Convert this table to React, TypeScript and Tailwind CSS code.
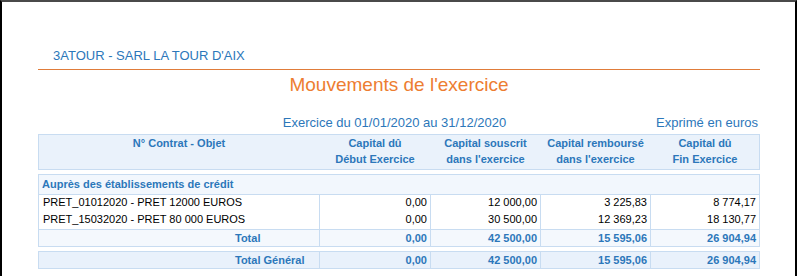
import React from "react";

const blue = "text-[#2c77ba]";
const cols = "grid grid-cols-[280px_111px_110px_110px_109px]";

const loans = [
  { label: "PRET_01012020 - PRET 12000 EUROS", values: ["0,00", "12 000,00", "3 225,83", "8 774,17"] },
  { label: "PRET_15032020 - PRET 80 000 EUROS", values: ["0,00", "30 500,00", "12 369,23", "18 130,77"] },
];

const totals = ["0,00", "42 500,00", "15 595,06", "26 904,94"];

const headers = [
  ["Capital dû", "Début Exercice"],
  ["Capital souscrit", "dans l'exercice"],
  ["Capital remboursé", "dans l'exercice"],
  ["Capital dû", "Fin Exercice"],
];

function TotalRow({ label, bg }: { label: string; bg: string }) {
  return (
    <div className={`${cols} ${bg} border border-[#c8dcf1] leading-[16px] font-bold ${blue}`}>
      <div className="pl-[196px]">{label}</div>
      {totals.map((v, i) => (
        <div key={i} className="border-l border-[#c8dcf1] text-right pr-[3px]">
          {v}
        </div>
      ))}
    </div>
  );
}

export default function App() {
  return (
    <div
      className="w-[797px] h-[276px] overflow-hidden bg-white border-t-2 border-t-[#4a4a4a] border-l-2 border-l-black border-r-2 border-r-black pt-[46px] pl-[36px]"
      style={{ fontFamily: '"Liberation Sans", Arial, sans-serif' }}
    >
      <div className="w-[722px]">
        <div className={`pl-[15px] pb-[6px] border-b border-[#e07c3a] text-[13px] leading-[15px] ${blue}`}>
          3ATOUR - SARL LA TOUR D'AIX
        </div>
        <div className="mt-[4px] text-center text-[19px] leading-[22px] text-[#ed7d31]">
          Mouvements de l'exercice
        </div>

        <div className={`mt-[19px] grid grid-cols-[1fr_auto_1fr] text-[13px] leading-[15px] ${blue}`}>
          <div />
          <div className="pr-[9px]">Exercice du 01/01/2020 au 31/12/2020</div>
          <div className="text-right pr-[2px]">Exprimé en euros</div>
        </div>

        <div className={`mt-[4px] ${cols} bg-[#eaf2fb] border border-[#c8dcf1] pb-[2px] text-[11px] leading-[16px] font-bold ${blue}`}>
          <div className="text-center">N° Contrat - Objet</div>
          {headers.map((h, i) => (
            <div key={i} className="text-center border-l border-transparent">
              <div>{h[0]}</div>
              <div>{h[1]}</div>
            </div>
          ))}
        </div>

        <div className="mt-[4px] text-[11px]">
          <div className="border border-[#c8dcf1]">
            <div className={`bg-[#f2f7fd] border-b border-[#c8dcf1] pl-[3px] leading-[19px] font-bold ${blue}`}>
              Auprès des établissements de crédit
            </div>
            {loans.map((l) => (
              <div key={l.label} className={`${cols} h-[17px] leading-[15px] text-black`}>
                <div className="pl-[4px]">{l.label}</div>
                {l.values.map((v, i) => (
                  <div key={i} className="border-l border-[#c8dcf1] text-right pr-[3px]">
                    {v}
                  </div>
                ))}
              </div>
            ))}
          </div>
          <div className="-mt-px">
            <TotalRow label="Total" bg="bg-[#f4f8fd]" />
          </div>
          <div className="mt-[4px]">
            <TotalRow label="Total Général" bg="bg-[#e9f1fb]" />
          </div>
        </div>
      </div>
    </div>
  );
}
